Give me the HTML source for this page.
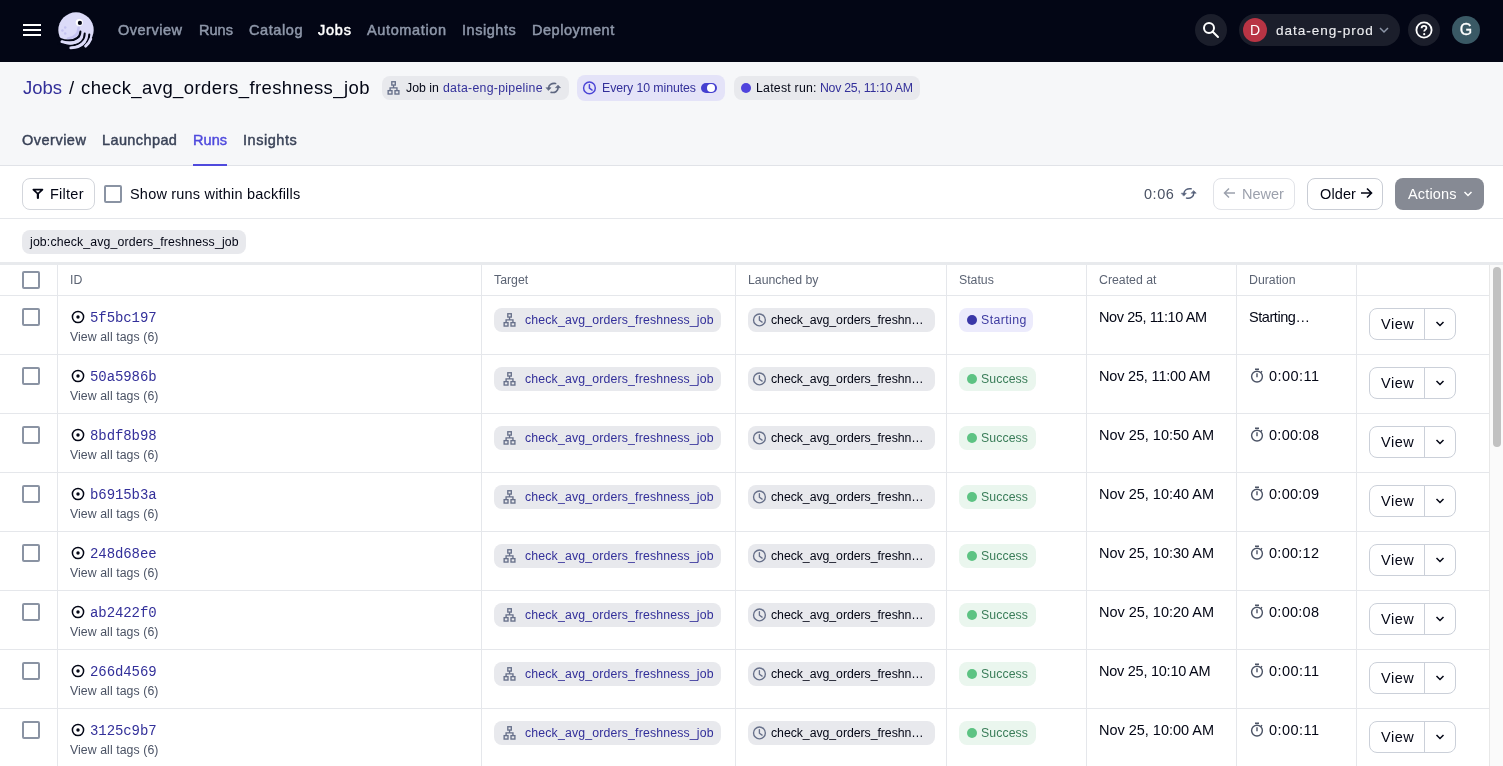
<!DOCTYPE html>
<html><head><meta charset="utf-8"><style>
html,body{margin:0;padding:0;}
body{width:1503px;height:766px;overflow:hidden;position:relative;background:#fff;font-family:'Liberation Sans',sans-serif;}
.t{position:absolute;white-space:nowrap;line-height:1;will-change:transform;}
</style></head><body>
<!-- NAV -->
<div style="position:absolute;left:0;top:0;width:1503px;height:62px;background:#030615"></div>
<div style="position:absolute;left:23px;top:24px;width:18px;height:2px;background:#fff"></div>
<div style="position:absolute;left:23px;top:29px;width:18px;height:2px;background:#fff"></div>
<div style="position:absolute;left:23px;top:34px;width:18px;height:2px;background:#fff"></div>
<!-- logo -->
<svg style="position:absolute;left:54px;top:8.8px" width="44" height="44" viewBox="0 0 44 44">
  <circle cx="22" cy="21" r="17.7" fill="#DCDBF8"/>
  <path d="M24.6 19 C24.3 25, 21 28.6, 14 29.6" stroke="#C6C4F1" stroke-width="2.6" fill="none" stroke-linecap="round"/>
  <path d="M26.4 22.6 C26.2 28.5, 21.5 31.4, 14 31.5 C9 31.5, 5 30, 1 26" stroke="#030615" stroke-width="2" fill="none" stroke-linecap="round"/>
  <path d="M30.7 24.5 C30.6 31, 26 35.6, 19 36.6 C15 37.1, 11 36.8, 4 34" stroke="#030615" stroke-width="2" fill="none" stroke-linecap="round"/>
  <path d="M35.3 25.4 C35.1 30, 33.6 34, 30 36.8 C27 39, 22 40.6, 13 41" stroke="#030615" stroke-width="2" fill="none" stroke-linecap="round"/>
  <path d="M7.9 32.7 C14 34.6, 21 34.3, 25.2 30.8" stroke="#DCDBF8" stroke-width="2.9" fill="none" stroke-linecap="round"/>
  <path d="M16.8 38.9 C22 38.7, 27.3 36.6, 30.2 32.8" stroke="#DCDBF8" stroke-width="2.9" fill="none" stroke-linecap="round"/>
  <path d="M31.6 37.1 C34 35, 35.8 32.5, 36.8 30" stroke="#DCDBF8" stroke-width="2.9" fill="none" stroke-linecap="round"/>
  <circle cx="25.3" cy="13.5" r="3.6" fill="#FFFFFF"/>
  <circle cx="25.9" cy="13.9" r="2.1" fill="#030615"/>
  <circle cx="11.2" cy="18.6" r="1.25" fill="#C5C3F1"/>
  <circle cx="8.4" cy="21.4" r="1.25" fill="#C5C3F1"/>
  <circle cx="11.2" cy="24.5" r="1.25" fill="#C5C3F1"/>
</svg>
<!-- right nav -->
<div style="position:absolute;left:1195px;top:14px;width:32px;height:32px;border-radius:16px;background:#1B1E2B"></div>
<svg style="position:absolute;left:1202px;top:21px" width="18" height="18" viewBox="0 0 18 18"><circle cx="7" cy="7" r="5" stroke="#fff" stroke-width="2" fill="none"/><path d="M10.5 10.5 L16 16" stroke="#fff" stroke-width="2" stroke-linecap="round"/></svg>
<div style="position:absolute;left:1239px;top:14px;width:161px;height:32px;border-radius:16px;background:#1B1E2B"></div>
<div style="position:absolute;left:1243px;top:18px;width:24px;height:24px;border-radius:12px;background:#B83444"></div>
<div style="position:absolute;left:1243px;top:18px;width:24px;height:24px;line-height:24px;text-align:center;color:#fff;font:14px/24px 'Liberation Sans';will-change:transform;">D</div>
<svg style="position:absolute;left:1379px;top:26px" width="10" height="8" viewBox="0 0 10 8"><path d="M1 2 L5 6 L9 2" stroke="#8D96A8" stroke-width="1.5" fill="none"/></svg>
<div style="position:absolute;left:1408px;top:14px;width:32px;height:32px;border-radius:16px;background:#1B1E2B"></div>
<svg style="position:absolute;left:1415px;top:21px" width="18" height="18" viewBox="0 0 18 18"><circle cx="9" cy="9" r="7.6" stroke="#fff" stroke-width="1.8" fill="none"/><path d="M6.6 7.2 C6.6 5.6 7.7 4.8 9 4.8 C10.4 4.8 11.4 5.7 11.4 7 C11.4 8.6 9.2 8.8 9.2 10.6" stroke="#fff" stroke-width="1.8" fill="none"/><circle cx="9.2" cy="13.2" r="1.1" fill="#fff"/></svg>
<div style="position:absolute;left:1452px;top:16px;width:28px;height:28px;border-radius:14px;background:#3A5965;color:#fff;font:16px/28px 'Liberation Sans';text-align:center;will-change:transform;-webkit-text-stroke:0.3px #fff">G</div>

<!-- HEADER -->
<div style="position:absolute;left:0;top:62px;width:1503px;height:103px;background:#F6F7F9"></div>
<div style="position:absolute;left:0;top:165px;width:1503px;height:1px;background:#E1E3E8"></div>
<div style="position:absolute;left:193px;top:164px;width:34px;height:2px;background:#4F4ADD"></div>
<!-- tag 1 -->
<div style="position:absolute;left:382px;top:76px;width:187px;height:24px;border-radius:8px;background:#E8E9ED"></div>
<svg style="position:absolute;left:384px;top:78px" width="20" height="20" viewBox="0 0 20 20" fill="none" stroke="#67708A" stroke-width="1.35"><rect x="7.8" y="3.75" width="3.5" height="3.3"/><path d="M9.55 7.1 V9.9 M6.1 12.6 V9.9 H12.95 V12.6"/><rect x="4.15" y="12.65" width="3.85" height="3.4"/><rect x="11" y="12.65" width="3.9" height="3.4"/></svg>
<svg style="position:absolute;left:542px;top:78px" width="24" height="20" viewBox="0 0 24 20" fill="none" stroke="#5E6780" stroke-width="1.6" stroke-linecap="round"><path d="M13.6 5.5 C9.5 4.8, 6.6 7.2, 6.65 10"/><path d="M9.1 14.4 C13.2 15.2, 16.2 12.8, 16.15 9.6"/><path d="M4.3 9.7 H9 L6.65 12.3 Z M13.8 9.7 H18.5 L16.15 7.3 Z" fill="#5E6780" stroke-width="0.6" stroke-linejoin="round"/></svg>
<!-- tag 2 -->
<div style="position:absolute;left:577px;top:75px;width:148px;height:26px;border-radius:8px;background:#E4E3F8"></div>
<svg style="position:absolute;left:579px;top:78px" width="20" height="20" viewBox="0 0 20 20" fill="none" stroke="#4B45D6" stroke-width="1.45" stroke-linecap="round" stroke-linejoin="round"><circle cx="10.45" cy="9.9" r="5.85"/><path d="M10.4 6.6 V10.2 L13.1 12.1"/></svg>
<div style="position:absolute;left:700.7px;top:82.8px;width:16px;height:10.2px;border-radius:5.1px;background:#4540D0"></div>
<div style="position:absolute;left:707px;top:83.7px;width:8.4px;height:8.4px;border-radius:4.2px;background:#fff"></div>
<!-- tag 3 -->
<div style="position:absolute;left:734px;top:76px;width:186px;height:24px;border-radius:8px;background:#E8E9ED"></div>
<div style="position:absolute;left:741px;top:83px;width:10px;height:10px;border-radius:5px;background:#4F43DD"></div>

<!-- TOOLBAR -->
<div style="position:absolute;left:0;top:166px;width:1503px;height:52px;background:#fff"></div>
<div style="position:absolute;left:0;top:218px;width:1503px;height:1px;background:#E5E7EB"></div>
<div style="position:absolute;left:22px;top:178px;width:71px;height:30px;border:1px solid #D3D6DC;border-radius:8px;background:#fff"></div>
<svg style="position:absolute;left:28px;top:182px" width="20" height="22" viewBox="0 0 20 22" fill="none" stroke="#030615" stroke-linejoin="round" stroke-linecap="round"><path d="M5.3 7.6 H14.5 L9.9 11.9 Z" stroke-width="1.6"/><path d="M9.9 12 V15.9" stroke-width="2.2"/></svg>
<div style="position:absolute;left:104px;top:185px;width:14px;height:14px;border:2px solid #8A93A3;border-radius:2px"></div>
<svg style="position:absolute;left:1177.4px;top:182.6px" width="25" height="21" viewBox="0 0 24 20" fill="none" stroke="#55607A" stroke-width="1.35" stroke-linecap="round"><path d="M13.6 5.5 C9.5 4.8, 6.6 7.2, 6.65 10"/><path d="M9.1 14.4 C13.2 15.2, 16.2 12.8, 16.15 9.6"/><path d="M4.3 9.7 H9 L6.65 12.3 Z M13.8 9.7 H18.5 L16.15 7.3 Z" fill="#55607A" stroke-width="0.5" stroke-linejoin="round"/></svg>
<div style="position:absolute;left:1213px;top:178px;width:80px;height:30px;border:1px solid #E1E3E8;border-radius:8px"></div>
<svg style="position:absolute;left:1223px;top:187px" width="13" height="12" viewBox="0 0 13 12" fill="none" stroke="#9CA1AD" stroke-width="1.5"><path d="M12 6 H1.5 M6 1.5 L1.5 6 L6 10.5"/></svg>
<div style="position:absolute;left:1307px;top:178px;width:74px;height:30px;border:1px solid #C9CDD5;border-radius:8px"></div>
<svg style="position:absolute;left:1360px;top:187px" width="13" height="12" viewBox="0 0 13 12" fill="none" stroke="#030615" stroke-width="1.6"><path d="M1 6 H11.5 M7 1.5 L11.5 6 L7 10.5"/></svg>
<div style="position:absolute;left:1395px;top:178px;width:89px;height:32px;border-radius:8px;background:#868A94"></div>
<svg style="position:absolute;left:1463px;top:190px" width="10" height="8" viewBox="0 0 10 8"><path d="M1.5 2 L5 5.5 L8.5 2" stroke="#fff" stroke-width="1.5" fill="none"/></svg>

<!-- filter tag area -->
<div style="position:absolute;left:0;top:219px;width:1503px;height:43px;background:#fff"></div>
<div style="position:absolute;left:22px;top:230px;width:224px;height:24px;border-radius:8px;background:#E8E9ED"></div>

<!-- TABLE -->
<div style="position:absolute;left:0;top:262px;width:1503px;height:3px;background:#E8EAED"></div>
<div style="position:absolute;left:0;top:265px;width:1503px;height:501px;background:#fff"></div>

<div style="position:absolute;left:57px;top:265px;width:1px;height:501px;background:#E5E7EB"></div>
<div style="position:absolute;left:481px;top:265px;width:1px;height:501px;background:#E5E7EB"></div>
<div style="position:absolute;left:735px;top:265px;width:1px;height:501px;background:#E5E7EB"></div>
<div style="position:absolute;left:946px;top:265px;width:1px;height:501px;background:#E5E7EB"></div>
<div style="position:absolute;left:1086px;top:265px;width:1px;height:501px;background:#E5E7EB"></div>
<div style="position:absolute;left:1236px;top:265px;width:1px;height:501px;background:#E5E7EB"></div>
<div style="position:absolute;left:1356px;top:265px;width:1px;height:501px;background:#E5E7EB"></div>
<div style="position:absolute;left:1489px;top:265px;width:14px;height:501px;background:#FAFAFA"></div>
<div style="position:absolute;left:1489px;top:265px;width:1px;height:501px;background:#E8E8E8"></div>
<div style="position:absolute;left:1493px;top:267px;width:8px;height:180px;border-radius:4px;background:#C1C1C1"></div>
<div style="position:absolute;left:0;top:295px;width:1489px;height:1px;background:#E5E7EB"></div>
<div style="position:absolute;left:0;top:354px;width:1489px;height:1px;background:#E5E7EB"></div>
<div style="position:absolute;left:0;top:413px;width:1489px;height:1px;background:#E5E7EB"></div>
<div style="position:absolute;left:0;top:472px;width:1489px;height:1px;background:#E5E7EB"></div>
<div style="position:absolute;left:0;top:531px;width:1489px;height:1px;background:#E5E7EB"></div>
<div style="position:absolute;left:0;top:590px;width:1489px;height:1px;background:#E5E7EB"></div>
<div style="position:absolute;left:0;top:649px;width:1489px;height:1px;background:#E5E7EB"></div>
<div style="position:absolute;left:0;top:708px;width:1489px;height:1px;background:#E5E7EB"></div>
<div style="position:absolute;left:22px;top:271px;width:14px;height:14px;border:2px solid #8A93A3;border-radius:2px;background:#fff"></div>
<div style="position:absolute;left:22px;top:308px;width:14px;height:14px;border:2px solid #8A93A3;border-radius:2px;background:#fff"></div>
<svg style="position:absolute;left:71px;top:310px" width="14" height="14" viewBox="0 0 14 14"><circle cx="7" cy="7" r="5.6" stroke="#030615" stroke-width="1.5" fill="none"/><circle cx="7" cy="7" r="1.7" fill="#030615"/></svg>
<div style="position:absolute;left:494px;top:308px;width:227px;height:24px;border-radius:8px;background:#E8E9ED"></div>
<svg style="position:absolute;left:499.8px;top:310px" width="20" height="20" viewBox="0 0 20 20" fill="none" stroke="#67708A" stroke-width="1.35"><rect x="7.8" y="3.75" width="3.5" height="3.3"/><path d="M9.55 7.1 V9.9 M6.1 12.6 V9.9 H12.95 V12.6"/><rect x="4.15" y="12.65" width="3.85" height="3.4"/><rect x="11" y="12.65" width="3.9" height="3.4"/></svg>
<div style="position:absolute;left:748px;top:308px;width:187px;height:24px;border-radius:8px;background:#E8E9ED"></div>
<svg style="position:absolute;left:749.05px;top:309.9px" width="20" height="20" viewBox="0 0 20 20" fill="none" stroke="#67708A" stroke-width="1.35" stroke-linecap="round" stroke-linejoin="round"><circle cx="10.45" cy="9.9" r="5.9"/><path d="M10.4 6.6 V10.2 L13.1 12.1"/></svg>
<div style="position:absolute;left:959px;top:308px;width:74px;height:24px;border-radius:8px;background:#ECEBFC"></div>
<div style="position:absolute;left:967px;top:315px;width:10px;height:10px;border-radius:5px;background:#3A37A8"></div>
<div style="position:absolute;left:1369px;top:308px;width:85px;height:30px;border:1px solid #CBD0D9;border-radius:8px;background:#fff"></div>
<div style="position:absolute;left:1424px;top:309px;width:1px;height:30px;background:#CBD0D9"></div>
<svg style="position:absolute;left:1435px;top:320px" width="10" height="8" viewBox="0 0 10 8"><path d="M1.5 2 L5 5.5 L8.5 2" stroke="#030615" stroke-width="1.5" fill="none"/></svg>
<div style="position:absolute;left:22px;top:367px;width:14px;height:14px;border:2px solid #8A93A3;border-radius:2px;background:#fff"></div>
<svg style="position:absolute;left:71px;top:369px" width="14" height="14" viewBox="0 0 14 14"><circle cx="7" cy="7" r="5.6" stroke="#030615" stroke-width="1.5" fill="none"/><circle cx="7" cy="7" r="1.7" fill="#030615"/></svg>
<div style="position:absolute;left:494px;top:367px;width:227px;height:24px;border-radius:8px;background:#E8E9ED"></div>
<svg style="position:absolute;left:499.8px;top:369px" width="20" height="20" viewBox="0 0 20 20" fill="none" stroke="#67708A" stroke-width="1.35"><rect x="7.8" y="3.75" width="3.5" height="3.3"/><path d="M9.55 7.1 V9.9 M6.1 12.6 V9.9 H12.95 V12.6"/><rect x="4.15" y="12.65" width="3.85" height="3.4"/><rect x="11" y="12.65" width="3.9" height="3.4"/></svg>
<div style="position:absolute;left:748px;top:367px;width:187px;height:24px;border-radius:8px;background:#E8E9ED"></div>
<svg style="position:absolute;left:749.05px;top:368.9px" width="20" height="20" viewBox="0 0 20 20" fill="none" stroke="#67708A" stroke-width="1.35" stroke-linecap="round" stroke-linejoin="round"><circle cx="10.45" cy="9.9" r="5.9"/><path d="M10.4 6.6 V10.2 L13.1 12.1"/></svg>
<div style="position:absolute;left:959px;top:367px;width:77px;height:24px;border-radius:8px;background:#EAF6EE"></div>
<div style="position:absolute;left:967px;top:374px;width:10px;height:10px;border-radius:5px;background:#5DC383"></div>
<svg style="position:absolute;left:1250px;top:368px" width="14" height="15" viewBox="0 0 14 15" fill="none" stroke="#4B5365" stroke-width="1.4"><circle cx="7" cy="8.6" r="5.4"/><path d="M5 1.3 H9 M7 5.3 V9.2 M10.8 4.7 L11.9 3.1"/></svg>
<div style="position:absolute;left:1369px;top:367px;width:85px;height:30px;border:1px solid #CBD0D9;border-radius:8px;background:#fff"></div>
<div style="position:absolute;left:1424px;top:368px;width:1px;height:30px;background:#CBD0D9"></div>
<svg style="position:absolute;left:1435px;top:379px" width="10" height="8" viewBox="0 0 10 8"><path d="M1.5 2 L5 5.5 L8.5 2" stroke="#030615" stroke-width="1.5" fill="none"/></svg>
<div style="position:absolute;left:22px;top:426px;width:14px;height:14px;border:2px solid #8A93A3;border-radius:2px;background:#fff"></div>
<svg style="position:absolute;left:71px;top:428px" width="14" height="14" viewBox="0 0 14 14"><circle cx="7" cy="7" r="5.6" stroke="#030615" stroke-width="1.5" fill="none"/><circle cx="7" cy="7" r="1.7" fill="#030615"/></svg>
<div style="position:absolute;left:494px;top:426px;width:227px;height:24px;border-radius:8px;background:#E8E9ED"></div>
<svg style="position:absolute;left:499.8px;top:428px" width="20" height="20" viewBox="0 0 20 20" fill="none" stroke="#67708A" stroke-width="1.35"><rect x="7.8" y="3.75" width="3.5" height="3.3"/><path d="M9.55 7.1 V9.9 M6.1 12.6 V9.9 H12.95 V12.6"/><rect x="4.15" y="12.65" width="3.85" height="3.4"/><rect x="11" y="12.65" width="3.9" height="3.4"/></svg>
<div style="position:absolute;left:748px;top:426px;width:187px;height:24px;border-radius:8px;background:#E8E9ED"></div>
<svg style="position:absolute;left:749.05px;top:427.9px" width="20" height="20" viewBox="0 0 20 20" fill="none" stroke="#67708A" stroke-width="1.35" stroke-linecap="round" stroke-linejoin="round"><circle cx="10.45" cy="9.9" r="5.9"/><path d="M10.4 6.6 V10.2 L13.1 12.1"/></svg>
<div style="position:absolute;left:959px;top:426px;width:77px;height:24px;border-radius:8px;background:#EAF6EE"></div>
<div style="position:absolute;left:967px;top:433px;width:10px;height:10px;border-radius:5px;background:#5DC383"></div>
<svg style="position:absolute;left:1250px;top:427px" width="14" height="15" viewBox="0 0 14 15" fill="none" stroke="#4B5365" stroke-width="1.4"><circle cx="7" cy="8.6" r="5.4"/><path d="M5 1.3 H9 M7 5.3 V9.2 M10.8 4.7 L11.9 3.1"/></svg>
<div style="position:absolute;left:1369px;top:426px;width:85px;height:30px;border:1px solid #CBD0D9;border-radius:8px;background:#fff"></div>
<div style="position:absolute;left:1424px;top:427px;width:1px;height:30px;background:#CBD0D9"></div>
<svg style="position:absolute;left:1435px;top:438px" width="10" height="8" viewBox="0 0 10 8"><path d="M1.5 2 L5 5.5 L8.5 2" stroke="#030615" stroke-width="1.5" fill="none"/></svg>
<div style="position:absolute;left:22px;top:485px;width:14px;height:14px;border:2px solid #8A93A3;border-radius:2px;background:#fff"></div>
<svg style="position:absolute;left:71px;top:487px" width="14" height="14" viewBox="0 0 14 14"><circle cx="7" cy="7" r="5.6" stroke="#030615" stroke-width="1.5" fill="none"/><circle cx="7" cy="7" r="1.7" fill="#030615"/></svg>
<div style="position:absolute;left:494px;top:485px;width:227px;height:24px;border-radius:8px;background:#E8E9ED"></div>
<svg style="position:absolute;left:499.8px;top:487px" width="20" height="20" viewBox="0 0 20 20" fill="none" stroke="#67708A" stroke-width="1.35"><rect x="7.8" y="3.75" width="3.5" height="3.3"/><path d="M9.55 7.1 V9.9 M6.1 12.6 V9.9 H12.95 V12.6"/><rect x="4.15" y="12.65" width="3.85" height="3.4"/><rect x="11" y="12.65" width="3.9" height="3.4"/></svg>
<div style="position:absolute;left:748px;top:485px;width:187px;height:24px;border-radius:8px;background:#E8E9ED"></div>
<svg style="position:absolute;left:749.05px;top:486.9px" width="20" height="20" viewBox="0 0 20 20" fill="none" stroke="#67708A" stroke-width="1.35" stroke-linecap="round" stroke-linejoin="round"><circle cx="10.45" cy="9.9" r="5.9"/><path d="M10.4 6.6 V10.2 L13.1 12.1"/></svg>
<div style="position:absolute;left:959px;top:485px;width:77px;height:24px;border-radius:8px;background:#EAF6EE"></div>
<div style="position:absolute;left:967px;top:492px;width:10px;height:10px;border-radius:5px;background:#5DC383"></div>
<svg style="position:absolute;left:1250px;top:486px" width="14" height="15" viewBox="0 0 14 15" fill="none" stroke="#4B5365" stroke-width="1.4"><circle cx="7" cy="8.6" r="5.4"/><path d="M5 1.3 H9 M7 5.3 V9.2 M10.8 4.7 L11.9 3.1"/></svg>
<div style="position:absolute;left:1369px;top:485px;width:85px;height:30px;border:1px solid #CBD0D9;border-radius:8px;background:#fff"></div>
<div style="position:absolute;left:1424px;top:486px;width:1px;height:30px;background:#CBD0D9"></div>
<svg style="position:absolute;left:1435px;top:497px" width="10" height="8" viewBox="0 0 10 8"><path d="M1.5 2 L5 5.5 L8.5 2" stroke="#030615" stroke-width="1.5" fill="none"/></svg>
<div style="position:absolute;left:22px;top:544px;width:14px;height:14px;border:2px solid #8A93A3;border-radius:2px;background:#fff"></div>
<svg style="position:absolute;left:71px;top:546px" width="14" height="14" viewBox="0 0 14 14"><circle cx="7" cy="7" r="5.6" stroke="#030615" stroke-width="1.5" fill="none"/><circle cx="7" cy="7" r="1.7" fill="#030615"/></svg>
<div style="position:absolute;left:494px;top:544px;width:227px;height:24px;border-radius:8px;background:#E8E9ED"></div>
<svg style="position:absolute;left:499.8px;top:546px" width="20" height="20" viewBox="0 0 20 20" fill="none" stroke="#67708A" stroke-width="1.35"><rect x="7.8" y="3.75" width="3.5" height="3.3"/><path d="M9.55 7.1 V9.9 M6.1 12.6 V9.9 H12.95 V12.6"/><rect x="4.15" y="12.65" width="3.85" height="3.4"/><rect x="11" y="12.65" width="3.9" height="3.4"/></svg>
<div style="position:absolute;left:748px;top:544px;width:187px;height:24px;border-radius:8px;background:#E8E9ED"></div>
<svg style="position:absolute;left:749.05px;top:545.9px" width="20" height="20" viewBox="0 0 20 20" fill="none" stroke="#67708A" stroke-width="1.35" stroke-linecap="round" stroke-linejoin="round"><circle cx="10.45" cy="9.9" r="5.9"/><path d="M10.4 6.6 V10.2 L13.1 12.1"/></svg>
<div style="position:absolute;left:959px;top:544px;width:77px;height:24px;border-radius:8px;background:#EAF6EE"></div>
<div style="position:absolute;left:967px;top:551px;width:10px;height:10px;border-radius:5px;background:#5DC383"></div>
<svg style="position:absolute;left:1250px;top:545px" width="14" height="15" viewBox="0 0 14 15" fill="none" stroke="#4B5365" stroke-width="1.4"><circle cx="7" cy="8.6" r="5.4"/><path d="M5 1.3 H9 M7 5.3 V9.2 M10.8 4.7 L11.9 3.1"/></svg>
<div style="position:absolute;left:1369px;top:544px;width:85px;height:30px;border:1px solid #CBD0D9;border-radius:8px;background:#fff"></div>
<div style="position:absolute;left:1424px;top:545px;width:1px;height:30px;background:#CBD0D9"></div>
<svg style="position:absolute;left:1435px;top:556px" width="10" height="8" viewBox="0 0 10 8"><path d="M1.5 2 L5 5.5 L8.5 2" stroke="#030615" stroke-width="1.5" fill="none"/></svg>
<div style="position:absolute;left:22px;top:603px;width:14px;height:14px;border:2px solid #8A93A3;border-radius:2px;background:#fff"></div>
<svg style="position:absolute;left:71px;top:605px" width="14" height="14" viewBox="0 0 14 14"><circle cx="7" cy="7" r="5.6" stroke="#030615" stroke-width="1.5" fill="none"/><circle cx="7" cy="7" r="1.7" fill="#030615"/></svg>
<div style="position:absolute;left:494px;top:603px;width:227px;height:24px;border-radius:8px;background:#E8E9ED"></div>
<svg style="position:absolute;left:499.8px;top:605px" width="20" height="20" viewBox="0 0 20 20" fill="none" stroke="#67708A" stroke-width="1.35"><rect x="7.8" y="3.75" width="3.5" height="3.3"/><path d="M9.55 7.1 V9.9 M6.1 12.6 V9.9 H12.95 V12.6"/><rect x="4.15" y="12.65" width="3.85" height="3.4"/><rect x="11" y="12.65" width="3.9" height="3.4"/></svg>
<div style="position:absolute;left:748px;top:603px;width:187px;height:24px;border-radius:8px;background:#E8E9ED"></div>
<svg style="position:absolute;left:749.05px;top:604.9px" width="20" height="20" viewBox="0 0 20 20" fill="none" stroke="#67708A" stroke-width="1.35" stroke-linecap="round" stroke-linejoin="round"><circle cx="10.45" cy="9.9" r="5.9"/><path d="M10.4 6.6 V10.2 L13.1 12.1"/></svg>
<div style="position:absolute;left:959px;top:603px;width:77px;height:24px;border-radius:8px;background:#EAF6EE"></div>
<div style="position:absolute;left:967px;top:610px;width:10px;height:10px;border-radius:5px;background:#5DC383"></div>
<svg style="position:absolute;left:1250px;top:604px" width="14" height="15" viewBox="0 0 14 15" fill="none" stroke="#4B5365" stroke-width="1.4"><circle cx="7" cy="8.6" r="5.4"/><path d="M5 1.3 H9 M7 5.3 V9.2 M10.8 4.7 L11.9 3.1"/></svg>
<div style="position:absolute;left:1369px;top:603px;width:85px;height:30px;border:1px solid #CBD0D9;border-radius:8px;background:#fff"></div>
<div style="position:absolute;left:1424px;top:604px;width:1px;height:30px;background:#CBD0D9"></div>
<svg style="position:absolute;left:1435px;top:615px" width="10" height="8" viewBox="0 0 10 8"><path d="M1.5 2 L5 5.5 L8.5 2" stroke="#030615" stroke-width="1.5" fill="none"/></svg>
<div style="position:absolute;left:22px;top:662px;width:14px;height:14px;border:2px solid #8A93A3;border-radius:2px;background:#fff"></div>
<svg style="position:absolute;left:71px;top:664px" width="14" height="14" viewBox="0 0 14 14"><circle cx="7" cy="7" r="5.6" stroke="#030615" stroke-width="1.5" fill="none"/><circle cx="7" cy="7" r="1.7" fill="#030615"/></svg>
<div style="position:absolute;left:494px;top:662px;width:227px;height:24px;border-radius:8px;background:#E8E9ED"></div>
<svg style="position:absolute;left:499.8px;top:664px" width="20" height="20" viewBox="0 0 20 20" fill="none" stroke="#67708A" stroke-width="1.35"><rect x="7.8" y="3.75" width="3.5" height="3.3"/><path d="M9.55 7.1 V9.9 M6.1 12.6 V9.9 H12.95 V12.6"/><rect x="4.15" y="12.65" width="3.85" height="3.4"/><rect x="11" y="12.65" width="3.9" height="3.4"/></svg>
<div style="position:absolute;left:748px;top:662px;width:187px;height:24px;border-radius:8px;background:#E8E9ED"></div>
<svg style="position:absolute;left:749.05px;top:663.9px" width="20" height="20" viewBox="0 0 20 20" fill="none" stroke="#67708A" stroke-width="1.35" stroke-linecap="round" stroke-linejoin="round"><circle cx="10.45" cy="9.9" r="5.9"/><path d="M10.4 6.6 V10.2 L13.1 12.1"/></svg>
<div style="position:absolute;left:959px;top:662px;width:77px;height:24px;border-radius:8px;background:#EAF6EE"></div>
<div style="position:absolute;left:967px;top:669px;width:10px;height:10px;border-radius:5px;background:#5DC383"></div>
<svg style="position:absolute;left:1250px;top:663px" width="14" height="15" viewBox="0 0 14 15" fill="none" stroke="#4B5365" stroke-width="1.4"><circle cx="7" cy="8.6" r="5.4"/><path d="M5 1.3 H9 M7 5.3 V9.2 M10.8 4.7 L11.9 3.1"/></svg>
<div style="position:absolute;left:1369px;top:662px;width:85px;height:30px;border:1px solid #CBD0D9;border-radius:8px;background:#fff"></div>
<div style="position:absolute;left:1424px;top:663px;width:1px;height:30px;background:#CBD0D9"></div>
<svg style="position:absolute;left:1435px;top:674px" width="10" height="8" viewBox="0 0 10 8"><path d="M1.5 2 L5 5.5 L8.5 2" stroke="#030615" stroke-width="1.5" fill="none"/></svg>
<div style="position:absolute;left:22px;top:721px;width:14px;height:14px;border:2px solid #8A93A3;border-radius:2px;background:#fff"></div>
<svg style="position:absolute;left:71px;top:723px" width="14" height="14" viewBox="0 0 14 14"><circle cx="7" cy="7" r="5.6" stroke="#030615" stroke-width="1.5" fill="none"/><circle cx="7" cy="7" r="1.7" fill="#030615"/></svg>
<div style="position:absolute;left:494px;top:721px;width:227px;height:24px;border-radius:8px;background:#E8E9ED"></div>
<svg style="position:absolute;left:499.8px;top:723px" width="20" height="20" viewBox="0 0 20 20" fill="none" stroke="#67708A" stroke-width="1.35"><rect x="7.8" y="3.75" width="3.5" height="3.3"/><path d="M9.55 7.1 V9.9 M6.1 12.6 V9.9 H12.95 V12.6"/><rect x="4.15" y="12.65" width="3.85" height="3.4"/><rect x="11" y="12.65" width="3.9" height="3.4"/></svg>
<div style="position:absolute;left:748px;top:721px;width:187px;height:24px;border-radius:8px;background:#E8E9ED"></div>
<svg style="position:absolute;left:749.05px;top:722.9px" width="20" height="20" viewBox="0 0 20 20" fill="none" stroke="#67708A" stroke-width="1.35" stroke-linecap="round" stroke-linejoin="round"><circle cx="10.45" cy="9.9" r="5.9"/><path d="M10.4 6.6 V10.2 L13.1 12.1"/></svg>
<div style="position:absolute;left:959px;top:721px;width:77px;height:24px;border-radius:8px;background:#EAF6EE"></div>
<div style="position:absolute;left:967px;top:728px;width:10px;height:10px;border-radius:5px;background:#5DC383"></div>
<svg style="position:absolute;left:1250px;top:722px" width="14" height="15" viewBox="0 0 14 15" fill="none" stroke="#4B5365" stroke-width="1.4"><circle cx="7" cy="8.6" r="5.4"/><path d="M5 1.3 H9 M7 5.3 V9.2 M10.8 4.7 L11.9 3.1"/></svg>
<div style="position:absolute;left:1369px;top:721px;width:85px;height:30px;border:1px solid #CBD0D9;border-radius:8px;background:#fff"></div>
<div style="position:absolute;left:1424px;top:722px;width:1px;height:30px;background:#CBD0D9"></div>
<svg style="position:absolute;left:1435px;top:733px" width="10" height="8" viewBox="0 0 10 8"><path d="M1.5 2 L5 5.5 L8.5 2" stroke="#030615" stroke-width="1.5" fill="none"/></svg>
<span id="t0" class="t" style="left:118.40px;top:22.98px;font-family:'Liberation Sans', sans-serif;font-size:14.5px;color:#8E97A9;-webkit-text-stroke:0.5px #8E97A9;letter-spacing:0.509px;">Overview</span><span id="t1" class="t" style="left:198.60px;top:22.98px;font-family:'Liberation Sans', sans-serif;font-size:14.5px;color:#8E97A9;-webkit-text-stroke:0.5px #8E97A9;letter-spacing:0.014px;">Runs</span><span id="t2" class="t" style="left:248.50px;top:22.98px;font-family:'Liberation Sans', sans-serif;font-size:14.5px;color:#8E97A9;-webkit-text-stroke:0.5px #8E97A9;letter-spacing:0.603px;">Catalog</span><span id="t3" class="t" style="left:318.40px;top:22.98px;font-family:'Liberation Sans', sans-serif;font-size:14.5px;color:#FFFFFF;-webkit-text-stroke:0.5px #FFFFFF;letter-spacing:0.753px;">Jobs</span><span id="t4" class="t" style="left:367.30px;top:22.98px;font-family:'Liberation Sans', sans-serif;font-size:14.5px;color:#8E97A9;-webkit-text-stroke:0.5px #8E97A9;letter-spacing:0.627px;">Automation</span><span id="t5" class="t" style="left:462.00px;top:22.98px;font-family:'Liberation Sans', sans-serif;font-size:14.5px;color:#8E97A9;-webkit-text-stroke:0.5px #8E97A9;letter-spacing:0.545px;">Insights</span><span id="t6" class="t" style="left:531.80px;top:22.98px;font-family:'Liberation Sans', sans-serif;font-size:14.5px;color:#8E97A9;-webkit-text-stroke:0.5px #8E97A9;letter-spacing:0.536px;">Deployment</span><span id="t7" class="t" style="left:1275.50px;top:23.84px;font-family:'Liberation Sans', sans-serif;font-size:13.6px;color:#ECEDF0;-webkit-text-stroke:0.12px #ECEDF0;letter-spacing:0.958px;">data-eng-prod</span><span id="t8" class="t" style="left:23.30px;top:78.58px;font-family:'Liberation Sans', sans-serif;font-size:18.5px;color:#33309A;">Jobs</span><span id="t9" class="t" style="left:68.50px;top:78.58px;font-family:'Liberation Sans', sans-serif;font-size:18.5px;color:#030615;">/</span><span id="t10" class="t" style="left:81.00px;top:78.58px;font-family:'Liberation Sans', sans-serif;font-size:18.5px;color:#030615;letter-spacing:0.408px;">check_avg_orders_freshness_job</span><span id="t11" class="t" style="left:406.00px;top:82.05px;font-family:'Liberation Sans', sans-serif;font-size:12.3px;color:#030615;">Job in</span><span id="t12" class="t" style="left:442.50px;top:82.05px;font-family:'Liberation Sans', sans-serif;font-size:12.3px;color:#33309A;letter-spacing:0.279px;">data-eng-pipeline</span><span id="t13" class="t" style="left:602.00px;top:82.05px;font-family:'Liberation Sans', sans-serif;font-size:12.3px;color:#33309A;letter-spacing:-0.068px;">Every 10 minutes</span><span id="t14" class="t" style="left:756.00px;top:82.05px;font-family:'Liberation Sans', sans-serif;font-size:12.3px;color:#030615;letter-spacing:0.239px;">Latest run:</span><span id="t15" class="t" style="left:820.00px;top:82.05px;font-family:'Liberation Sans', sans-serif;font-size:12.3px;color:#33309A;letter-spacing:-0.256px;">Nov 25, 11:10 AM</span><span id="t16" class="t" style="left:22.40px;top:132.98px;font-family:'Liberation Sans', sans-serif;font-size:14.5px;color:#3A4358;-webkit-text-stroke:0.45px #3A4358;letter-spacing:0.495px;">Overview</span><span id="t17" class="t" style="left:102.40px;top:132.98px;font-family:'Liberation Sans', sans-serif;font-size:14.5px;color:#3A4358;-webkit-text-stroke:0.45px #3A4358;letter-spacing:0.392px;">Launchpad</span><span id="t18" class="t" style="left:193.20px;top:132.98px;font-family:'Liberation Sans', sans-serif;font-size:14.5px;color:#4F4ADD;-webkit-text-stroke:0.45px #4F4ADD;letter-spacing:0.047px;">Runs</span><span id="t19" class="t" style="left:243.20px;top:132.98px;font-family:'Liberation Sans', sans-serif;font-size:14.5px;color:#3A4358;-webkit-text-stroke:0.45px #3A4358;letter-spacing:0.545px;">Insights</span><span id="t20" class="t" style="left:49.80px;top:186.98px;font-family:'Liberation Sans', sans-serif;font-size:14.5px;color:#030615;letter-spacing:0.253px;">Filter</span><span id="t21" class="t" style="left:130.20px;top:186.98px;font-family:'Liberation Sans', sans-serif;font-size:14.5px;color:#030615;letter-spacing:0.199px;">Show runs within backfills</span><span id="t22" class="t" style="left:1143.60px;top:186.78px;font-family:'Liberation Sans', sans-serif;font-size:14.5px;color:#4B5365;letter-spacing:0.522px;">0:06</span><span id="t23" class="t" style="left:1241.80px;top:186.78px;font-family:'Liberation Sans', sans-serif;font-size:14.5px;color:#9CA1AD;letter-spacing:-0.002px;">Newer</span><span id="t24" class="t" style="left:1319.70px;top:186.78px;font-family:'Liberation Sans', sans-serif;font-size:14.5px;color:#030615;letter-spacing:0.108px;">Older</span><span id="t25" class="t" style="left:1407.80px;top:186.78px;font-family:'Liberation Sans', sans-serif;font-size:14.5px;color:#FFFFFF;letter-spacing:0.173px;">Actions</span><span id="t26" class="t" style="left:30.40px;top:235.65px;font-family:'Liberation Sans', sans-serif;font-size:12.3px;color:#030615;letter-spacing:0.148px;">job:check_avg_orders_freshness_job</span><span id="t27" class="t" style="left:70.30px;top:273.65px;font-family:'Liberation Sans', sans-serif;font-size:12.3px;color:#5C6474;">ID</span><span id="t28" class="t" style="left:493.90px;top:273.65px;font-family:'Liberation Sans', sans-serif;font-size:12.3px;color:#5C6474;">Target</span><span id="t29" class="t" style="left:747.70px;top:273.65px;font-family:'Liberation Sans', sans-serif;font-size:12.3px;color:#5C6474;">Launched by</span><span id="t30" class="t" style="left:959.40px;top:273.65px;font-family:'Liberation Sans', sans-serif;font-size:12.3px;color:#5C6474;">Status</span><span id="t31" class="t" style="left:1099.10px;top:273.65px;font-family:'Liberation Sans', sans-serif;font-size:12.3px;color:#5C6474;">Created at</span><span id="t32" class="t" style="left:1249.00px;top:273.65px;font-family:'Liberation Sans', sans-serif;font-size:12.3px;color:#5C6474;">Duration</span><span id="t33" class="t" style="left:89.60px;top:311.16px;font-family:'Liberation Mono', monospace;font-size:14px;color:#33309A;letter-spacing:-0.088px;">5f5bc197</span><span id="t34" class="t" style="left:69.90px;top:331.25px;font-family:'Liberation Sans', sans-serif;font-size:12.3px;color:#4B5365;letter-spacing:0.071px;">View all tags (6)</span><span id="t35" class="t" style="left:525.30px;top:313.85px;font-family:'Liberation Sans', sans-serif;font-size:12.3px;color:#33309A;letter-spacing:0.162px;">check_avg_orders_freshness_job</span><span id="t36" class="t" style="left:771.40px;top:313.85px;font-family:'Liberation Sans', sans-serif;font-size:12.3px;color:#030615;letter-spacing:-0.052px;">check_avg_orders_freshn…</span><span id="t37" class="t" style="left:981.00px;top:313.85px;font-family:'Liberation Sans', sans-serif;font-size:12.3px;color:#3D3AA0;letter-spacing:0.430px;">Starting</span><span id="t38" class="t" style="left:1249.00px;top:309.98px;font-family:'Liberation Sans', sans-serif;font-size:14.5px;color:#030615;letter-spacing:-0.436px;">Starting…</span><span id="t39" class="t" style="left:1098.60px;top:309.88px;font-family:'Liberation Sans', sans-serif;font-size:14.5px;color:#030615;letter-spacing:-0.412px;">Nov 25, 11:10 AM</span><span id="t40" class="t" style="left:1381.00px;top:316.98px;font-family:'Liberation Sans', sans-serif;font-size:14.5px;color:#030615;letter-spacing:0.509px;">View</span><span id="t41" class="t" style="left:89.60px;top:370.16px;font-family:'Liberation Mono', monospace;font-size:14px;color:#33309A;letter-spacing:-0.088px;">50a5986b</span><span id="t42" class="t" style="left:69.90px;top:390.25px;font-family:'Liberation Sans', sans-serif;font-size:12.3px;color:#4B5365;letter-spacing:0.071px;">View all tags (6)</span><span id="t43" class="t" style="left:525.30px;top:372.85px;font-family:'Liberation Sans', sans-serif;font-size:12.3px;color:#33309A;letter-spacing:0.162px;">check_avg_orders_freshness_job</span><span id="t44" class="t" style="left:771.40px;top:372.85px;font-family:'Liberation Sans', sans-serif;font-size:12.3px;color:#030615;letter-spacing:-0.052px;">check_avg_orders_freshn…</span><span id="t45" class="t" style="left:980.80px;top:372.85px;font-family:'Liberation Sans', sans-serif;font-size:12.3px;color:#3A7D59;letter-spacing:0.086px;">Success</span><span id="t46" class="t" style="left:1269.00px;top:368.98px;font-family:'Liberation Sans', sans-serif;font-size:14.5px;color:#030615;letter-spacing:0.448px;">0:00:11</span><span id="t47" class="t" style="left:1098.60px;top:368.88px;font-family:'Liberation Sans', sans-serif;font-size:14.5px;color:#030615;letter-spacing:-0.179px;">Nov 25, 11:00 AM</span><span id="t48" class="t" style="left:1381.00px;top:375.98px;font-family:'Liberation Sans', sans-serif;font-size:14.5px;color:#030615;letter-spacing:0.509px;">View</span><span id="t49" class="t" style="left:89.60px;top:429.16px;font-family:'Liberation Mono', monospace;font-size:14px;color:#33309A;letter-spacing:-0.088px;">8bdf8b98</span><span id="t50" class="t" style="left:69.90px;top:449.25px;font-family:'Liberation Sans', sans-serif;font-size:12.3px;color:#4B5365;letter-spacing:0.071px;">View all tags (6)</span><span id="t51" class="t" style="left:525.30px;top:431.85px;font-family:'Liberation Sans', sans-serif;font-size:12.3px;color:#33309A;letter-spacing:0.162px;">check_avg_orders_freshness_job</span><span id="t52" class="t" style="left:771.40px;top:431.85px;font-family:'Liberation Sans', sans-serif;font-size:12.3px;color:#030615;letter-spacing:-0.052px;">check_avg_orders_freshn…</span><span id="t53" class="t" style="left:980.80px;top:431.85px;font-family:'Liberation Sans', sans-serif;font-size:12.3px;color:#3A7D59;letter-spacing:0.086px;">Success</span><span id="t54" class="t" style="left:1269.00px;top:427.98px;font-family:'Liberation Sans', sans-serif;font-size:14.5px;color:#030615;letter-spacing:0.268px;">0:00:08</span><span id="t55" class="t" style="left:1098.60px;top:427.88px;font-family:'Liberation Sans', sans-serif;font-size:14.5px;color:#030615;letter-spacing:-0.018px;">Nov 25, 10:50 AM</span><span id="t56" class="t" style="left:1381.00px;top:434.98px;font-family:'Liberation Sans', sans-serif;font-size:14.5px;color:#030615;letter-spacing:0.509px;">View</span><span id="t57" class="t" style="left:89.60px;top:488.16px;font-family:'Liberation Mono', monospace;font-size:14px;color:#33309A;letter-spacing:-0.088px;">b6915b3a</span><span id="t58" class="t" style="left:69.90px;top:508.25px;font-family:'Liberation Sans', sans-serif;font-size:12.3px;color:#4B5365;letter-spacing:0.071px;">View all tags (6)</span><span id="t59" class="t" style="left:525.30px;top:490.85px;font-family:'Liberation Sans', sans-serif;font-size:12.3px;color:#33309A;letter-spacing:0.162px;">check_avg_orders_freshness_job</span><span id="t60" class="t" style="left:771.40px;top:490.85px;font-family:'Liberation Sans', sans-serif;font-size:12.3px;color:#030615;letter-spacing:-0.052px;">check_avg_orders_freshn…</span><span id="t61" class="t" style="left:980.80px;top:490.85px;font-family:'Liberation Sans', sans-serif;font-size:12.3px;color:#3A7D59;letter-spacing:0.086px;">Success</span><span id="t62" class="t" style="left:1269.00px;top:486.98px;font-family:'Liberation Sans', sans-serif;font-size:14.5px;color:#030615;letter-spacing:0.268px;">0:00:09</span><span id="t63" class="t" style="left:1098.60px;top:486.88px;font-family:'Liberation Sans', sans-serif;font-size:14.5px;color:#030615;letter-spacing:-0.018px;">Nov 25, 10:40 AM</span><span id="t64" class="t" style="left:1381.00px;top:493.98px;font-family:'Liberation Sans', sans-serif;font-size:14.5px;color:#030615;letter-spacing:0.509px;">View</span><span id="t65" class="t" style="left:89.60px;top:547.16px;font-family:'Liberation Mono', monospace;font-size:14px;color:#33309A;letter-spacing:-0.088px;">248d68ee</span><span id="t66" class="t" style="left:69.90px;top:567.24px;font-family:'Liberation Sans', sans-serif;font-size:12.3px;color:#4B5365;letter-spacing:0.071px;">View all tags (6)</span><span id="t67" class="t" style="left:525.30px;top:549.84px;font-family:'Liberation Sans', sans-serif;font-size:12.3px;color:#33309A;letter-spacing:0.162px;">check_avg_orders_freshness_job</span><span id="t68" class="t" style="left:771.40px;top:549.84px;font-family:'Liberation Sans', sans-serif;font-size:12.3px;color:#030615;letter-spacing:-0.052px;">check_avg_orders_freshn…</span><span id="t69" class="t" style="left:980.80px;top:549.84px;font-family:'Liberation Sans', sans-serif;font-size:12.3px;color:#3A7D59;letter-spacing:0.086px;">Success</span><span id="t70" class="t" style="left:1269.00px;top:545.97px;font-family:'Liberation Sans', sans-serif;font-size:14.5px;color:#030615;letter-spacing:0.268px;">0:00:12</span><span id="t71" class="t" style="left:1098.60px;top:545.87px;font-family:'Liberation Sans', sans-serif;font-size:14.5px;color:#030615;letter-spacing:-0.018px;">Nov 25, 10:30 AM</span><span id="t72" class="t" style="left:1381.00px;top:552.97px;font-family:'Liberation Sans', sans-serif;font-size:14.5px;color:#030615;letter-spacing:0.509px;">View</span><span id="t73" class="t" style="left:89.60px;top:606.16px;font-family:'Liberation Mono', monospace;font-size:14px;color:#33309A;letter-spacing:-0.088px;">ab2422f0</span><span id="t74" class="t" style="left:69.90px;top:626.24px;font-family:'Liberation Sans', sans-serif;font-size:12.3px;color:#4B5365;letter-spacing:0.071px;">View all tags (6)</span><span id="t75" class="t" style="left:525.30px;top:608.84px;font-family:'Liberation Sans', sans-serif;font-size:12.3px;color:#33309A;letter-spacing:0.162px;">check_avg_orders_freshness_job</span><span id="t76" class="t" style="left:771.40px;top:608.84px;font-family:'Liberation Sans', sans-serif;font-size:12.3px;color:#030615;letter-spacing:-0.052px;">check_avg_orders_freshn…</span><span id="t77" class="t" style="left:980.80px;top:608.84px;font-family:'Liberation Sans', sans-serif;font-size:12.3px;color:#3A7D59;letter-spacing:0.086px;">Success</span><span id="t78" class="t" style="left:1269.00px;top:604.97px;font-family:'Liberation Sans', sans-serif;font-size:14.5px;color:#030615;letter-spacing:0.268px;">0:00:08</span><span id="t79" class="t" style="left:1098.60px;top:604.87px;font-family:'Liberation Sans', sans-serif;font-size:14.5px;color:#030615;letter-spacing:-0.018px;">Nov 25, 10:20 AM</span><span id="t80" class="t" style="left:1381.00px;top:611.97px;font-family:'Liberation Sans', sans-serif;font-size:14.5px;color:#030615;letter-spacing:0.509px;">View</span><span id="t81" class="t" style="left:89.60px;top:665.16px;font-family:'Liberation Mono', monospace;font-size:14px;color:#33309A;letter-spacing:-0.088px;">266d4569</span><span id="t82" class="t" style="left:69.90px;top:685.24px;font-family:'Liberation Sans', sans-serif;font-size:12.3px;color:#4B5365;letter-spacing:0.071px;">View all tags (6)</span><span id="t83" class="t" style="left:525.30px;top:667.84px;font-family:'Liberation Sans', sans-serif;font-size:12.3px;color:#33309A;letter-spacing:0.162px;">check_avg_orders_freshness_job</span><span id="t84" class="t" style="left:771.40px;top:667.84px;font-family:'Liberation Sans', sans-serif;font-size:12.3px;color:#030615;letter-spacing:-0.052px;">check_avg_orders_freshn…</span><span id="t85" class="t" style="left:980.80px;top:667.84px;font-family:'Liberation Sans', sans-serif;font-size:12.3px;color:#3A7D59;letter-spacing:0.086px;">Success</span><span id="t86" class="t" style="left:1269.00px;top:663.97px;font-family:'Liberation Sans', sans-serif;font-size:14.5px;color:#030615;letter-spacing:0.448px;">0:00:11</span><span id="t87" class="t" style="left:1098.60px;top:663.87px;font-family:'Liberation Sans', sans-serif;font-size:14.5px;color:#030615;letter-spacing:-0.251px;">Nov 25, 10:10 AM</span><span id="t88" class="t" style="left:1381.00px;top:670.97px;font-family:'Liberation Sans', sans-serif;font-size:14.5px;color:#030615;letter-spacing:0.509px;">View</span><span id="t89" class="t" style="left:89.60px;top:724.16px;font-family:'Liberation Mono', monospace;font-size:14px;color:#33309A;letter-spacing:-0.088px;">3125c9b7</span><span id="t90" class="t" style="left:69.90px;top:744.24px;font-family:'Liberation Sans', sans-serif;font-size:12.3px;color:#4B5365;letter-spacing:0.071px;">View all tags (6)</span><span id="t91" class="t" style="left:525.30px;top:726.84px;font-family:'Liberation Sans', sans-serif;font-size:12.3px;color:#33309A;letter-spacing:0.162px;">check_avg_orders_freshness_job</span><span id="t92" class="t" style="left:771.40px;top:726.84px;font-family:'Liberation Sans', sans-serif;font-size:12.3px;color:#030615;letter-spacing:-0.052px;">check_avg_orders_freshn…</span><span id="t93" class="t" style="left:980.80px;top:726.84px;font-family:'Liberation Sans', sans-serif;font-size:12.3px;color:#3A7D59;letter-spacing:0.086px;">Success</span><span id="t94" class="t" style="left:1269.00px;top:722.97px;font-family:'Liberation Sans', sans-serif;font-size:14.5px;color:#030615;letter-spacing:0.448px;">0:00:11</span><span id="t95" class="t" style="left:1098.60px;top:722.87px;font-family:'Liberation Sans', sans-serif;font-size:14.5px;color:#030615;letter-spacing:-0.018px;">Nov 25, 10:00 AM</span><span id="t96" class="t" style="left:1381.00px;top:729.97px;font-family:'Liberation Sans', sans-serif;font-size:14.5px;color:#030615;letter-spacing:0.509px;">View</span>
</body></html>
